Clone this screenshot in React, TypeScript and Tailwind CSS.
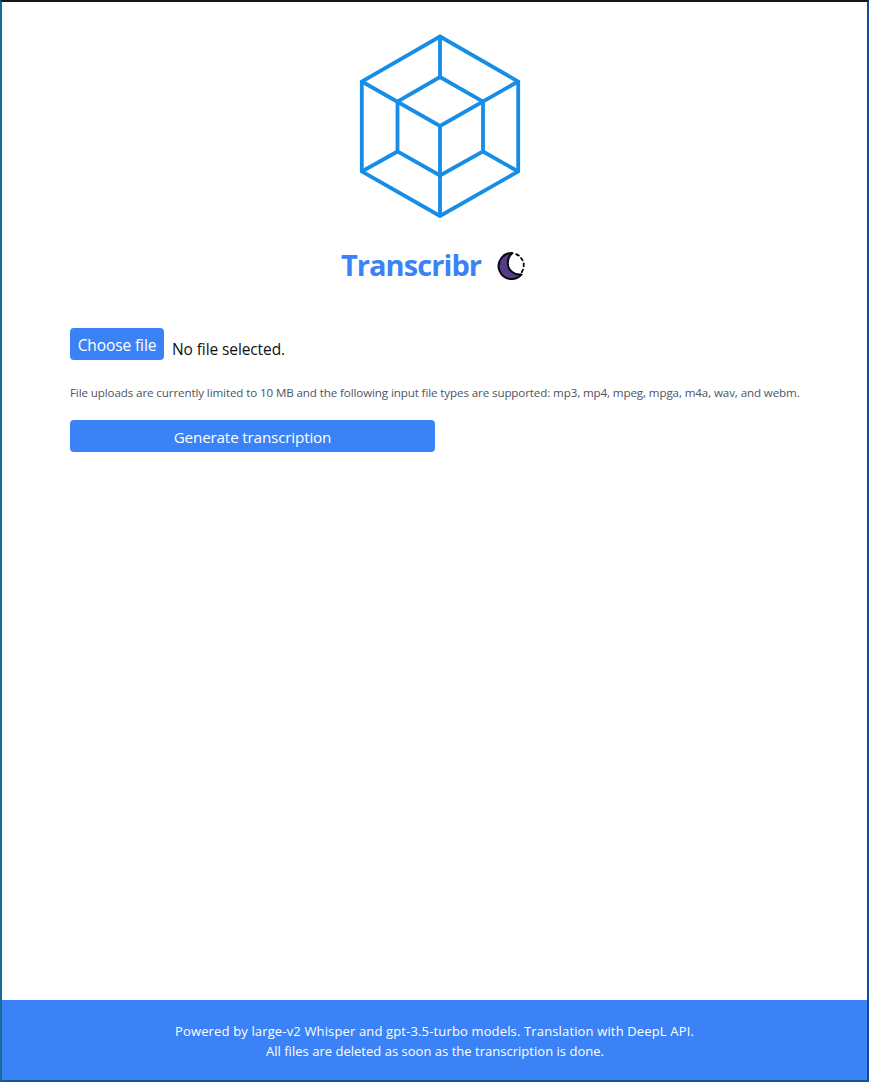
import React from "react";

function CubeLogo() {
  return (
    <svg className="h-[188px] w-[164px]" viewBox="358 32 164 188" fill="none" stroke="#168de6" strokeWidth="3.8" strokeLinejoin="miter">
      <path d="M440 36.5 518.2 81.5V171.5L440 216 361.8 171.5V81.5Z" />
      <path d="M440 77 483 101.5V151.5L440 175.5 397.5 151.5V101.5Z" />
      <path d="M440 36.5V77M361.8 81.5 440 126 518.2 81.5M440 126V216M361.8 171.5 397.5 151.5M518.2 171.5 483 151.5" />
    </svg>
  );
}

function MoonIcon() {
  return (
    <svg className="h-[30px] w-[30px]" viewBox="0 0 30 30" fill="none" stroke="#080810" strokeWidth="2" strokeLinecap="round" strokeLinejoin="round">
      <path d="M16.5 2.1A13 13 0 1 0 25.6 23.4C18 24.6 12 19 11.8 12.5C11.7 8 13.5 4.5 16.5 2.1Z" fill="#553c87" />
      <path d="M20.2 3.1 22.8 4.6M25 6.9 26.6 9.2M27.7 12.3V15.3M27 18.7 25.8 21.1" strokeWidth="1.8" />
    </svg>
  );
}

export default function App() {
  return (
    <div className="flex h-[1082px] w-[869px] flex-col border-2 border-t-[#17151c] border-r-[#154a98] border-b-[#14578f] border-l-[#166b9d] bg-white font-['Open_Sans','Noto_Sans',sans-serif]">
      <header className="flex flex-col items-center">
        <div className="mt-[30px] ml-[11px] h-[188px]"><CubeLogo /></div>
        <div className="mt-[26px] mr-[2px] flex h-[40px] items-center gap-[15px]">
          <h1 className="pb-[2px] text-[29px] leading-[38px] font-bold tracking-[-0.92px] whitespace-nowrap text-[#3b82f6]">Transcribr</h1>
          <button aria-label="Toggle theme"><MoonIcon /></button>
        </div>
      </header>
      <main className="flex flex-1 flex-col items-start pt-[42px] pl-[68px]">
        <label className="flex h-8 gap-2 text-[15.5px] leading-6 tracking-[-0.1px] whitespace-nowrap">
          <span className="flex h-8 w-[94px] justify-center rounded bg-[#3b82f6] pt-[5px] text-white">Choose file</span>
          <span className="pt-[9px] text-[#111]">No file selected.</span>
        </label>
        <p className="mt-[25px] text-[11.6px] leading-4 tracking-[-0.113px] whitespace-nowrap text-[#4b5563]">File uploads are currently limited to 10 MB and the following input file types are supported: mp3, mp4, mpeg, mpga, m4a, wav, and webm.</p>
        <button className="mt-[19px] flex h-8 w-[365px] justify-center rounded bg-[#3b82f6] pt-[5px] text-[15.2px] leading-6 tracking-[-0.15px] text-white">Generate transcription</button>
      </main>
      <footer className="h-20 bg-[#3b82f6] pt-[21px] text-center text-[13px] leading-5 whitespace-nowrap text-white">
        <p className="tracking-[0.146px]">Powered by large-v2 Whisper and gpt-3.5-turbo models. Translation with DeepL API.</p>
        <p className="pl-px tracking-[0.02px]">All files are deleted as soon as the transcription is done.</p>
      </footer>
    </div>
  );
}
